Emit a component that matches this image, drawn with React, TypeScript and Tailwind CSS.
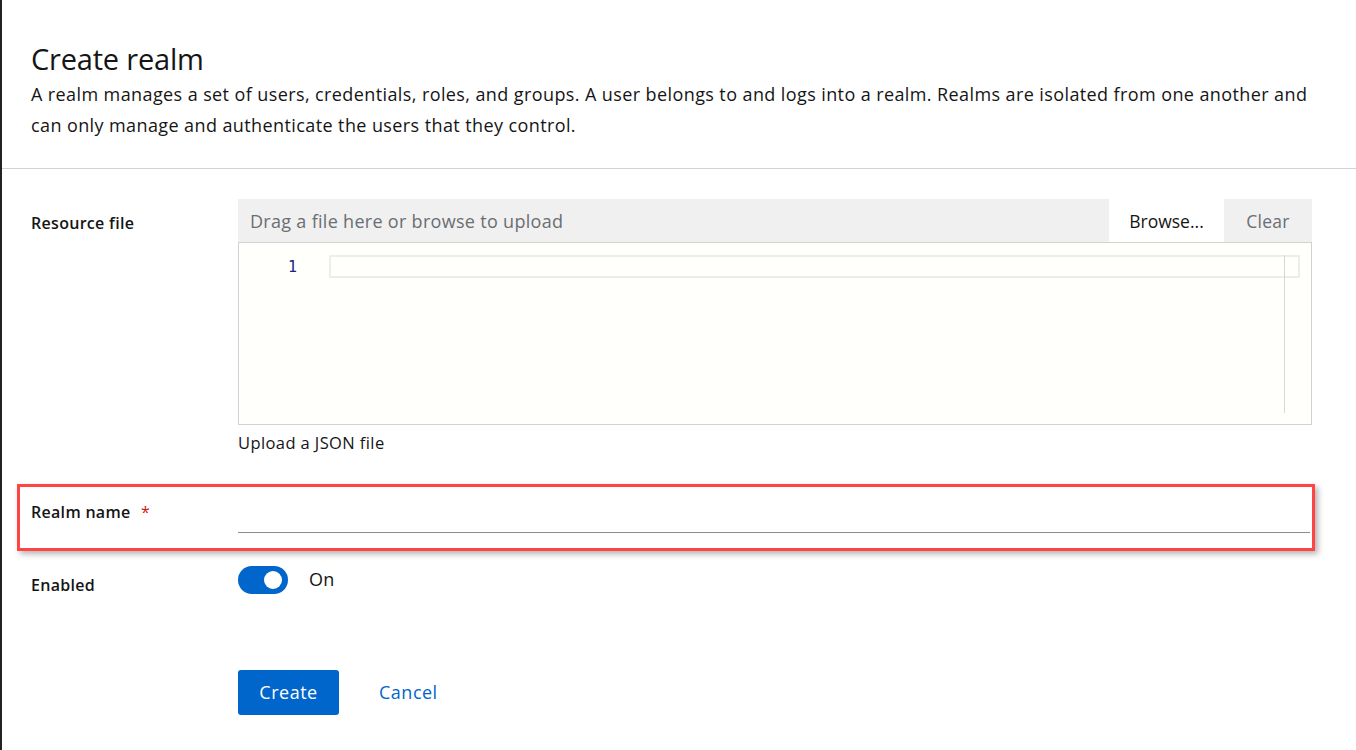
const App = () => {
    return (
        <div className="min-h-screen w-full bg-white border-l-2 border-[#222] text-[#151515] font-['Open_Sans','Liberation_Sans',sans-serif]">
            <header className="pl-[29px] pr-[40px] pt-[41px] pb-[27px] border-b border-[#d2d2d2]">
                <h1 className="text-[29px] leading-[36px] font-normal tracking-[-0.2px]">Create realm</h1>
                <p className="mt-[2px] text-[18px] leading-[31px] tracking-[0.4px] text-[#151515]">
                    A realm manages a set of users, credentials, roles, and groups. A user belongs to and logs into a realm. Realms are isolated from one another and can only manage and authenticate the users that they control.
                </p>
            </header>

            <main className="pl-[29px] pt-[30px] pr-[44px]">
                {/* resource file */}
                <section className="flex">
                    <label className="w-[207px] shrink-0 pt-[12px] text-[16px] font-semibold leading-[24px] tracking-[0.3px]">Resource file</label>
                    <div className="flex-1">
                        <div className="flex h-[44px] bg-[#f0f0f0] border-b border-[#d2d2d2] pt-[2px]">
                            <span className="flex-1 px-3 flex items-center text-[18px] tracking-[0.3px] text-[#6a6e73]">Drag a file here or browse to upload</span>
                            <button className="w-[115px] -mt-[2px] bg-white text-[17.5px] text-[#151515] pt-[2px]">Browse...</button>
                            <button className="w-[88px] text-[17.5px] text-[#6a6e73] tracking-[0.3px]">Clear</button>
                        </div>
                        <div className="h-[182px] border border-t-0 border-[#d2d2d2] bg-[#fffffc] flex pt-[12px]">
                            <div className="w-[90px] text-right pr-[32px] pt-[1px] text-[15px] leading-[22px] text-[#1a237e] font-['DejaVu_Sans_Mono',monospace]">1</div>
                            <div className="flex-1 relative mr-[11px]">
                                <div className="h-[23px] border-2 border-[#ededed]" />
                                <div className="absolute right-[15px] top-0 h-[158px] w-px bg-[#d6d6d6]" />
                            </div>
                        </div>
                        <p className="mt-[6px] text-[16.5px] leading-[24px] tracking-[0.4px]">Upload a JSON file</p>
                    </div>
                </section>

                {/* realm name, highlighted */}
                <section className="mt-[29px] -ml-[14px] -mr-[3px] flex border-[3px] border-[#ff4444] shadow-[3px_3px_6px_rgba(0,0,0,0.3)] pl-[11px] pt-[2px] pb-[15px] pr-[2px]">
                    <label className="w-[207px] shrink-0 pt-[11px] text-[16px] font-semibold leading-[24px] tracking-[0.3px]">
                        Realm name <span className="ml-[6px] text-[#c9190b] font-normal">*</span>
                    </label>
                    <input className="flex-1 h-[44px] border-b border-[#8a8d90] outline-none" aria-label="Realm name" />
                </section>

                {/* enabled */}
                <section className="mt-[11px] flex">
                    <label className="w-[207px] shrink-0 pt-[11px] text-[16px] font-semibold leading-[24px] tracking-[0.3px]">Enabled</label>
                    <div className="flex items-center gap-[21px] pt-[1px]">
                        <span className="relative w-[50px] h-[28px] rounded-full bg-[#0066cc]">
                            <span className="absolute right-[6px] top-[5px] w-[18px] h-[18px] rounded-full bg-white" />
                        </span>
                        <span className="text-[18px] -mt-[1px] tracking-[0.3px]">On</span>
                    </div>
                </section>

                {/* actions */}
                <section className="mt-[73px] flex items-center pl-[207px] gap-[40px]">
                    <button className="h-[45px] w-[101px] rounded-[3px] bg-[#0066cc] text-white text-[18px] tracking-[0.5px]">Create</button>
                    <button className="text-[#0066cc] text-[18px] tracking-[0.5px]">Cancel</button>
                </section>
            </main>
        </div>
    );
};

export default App;
